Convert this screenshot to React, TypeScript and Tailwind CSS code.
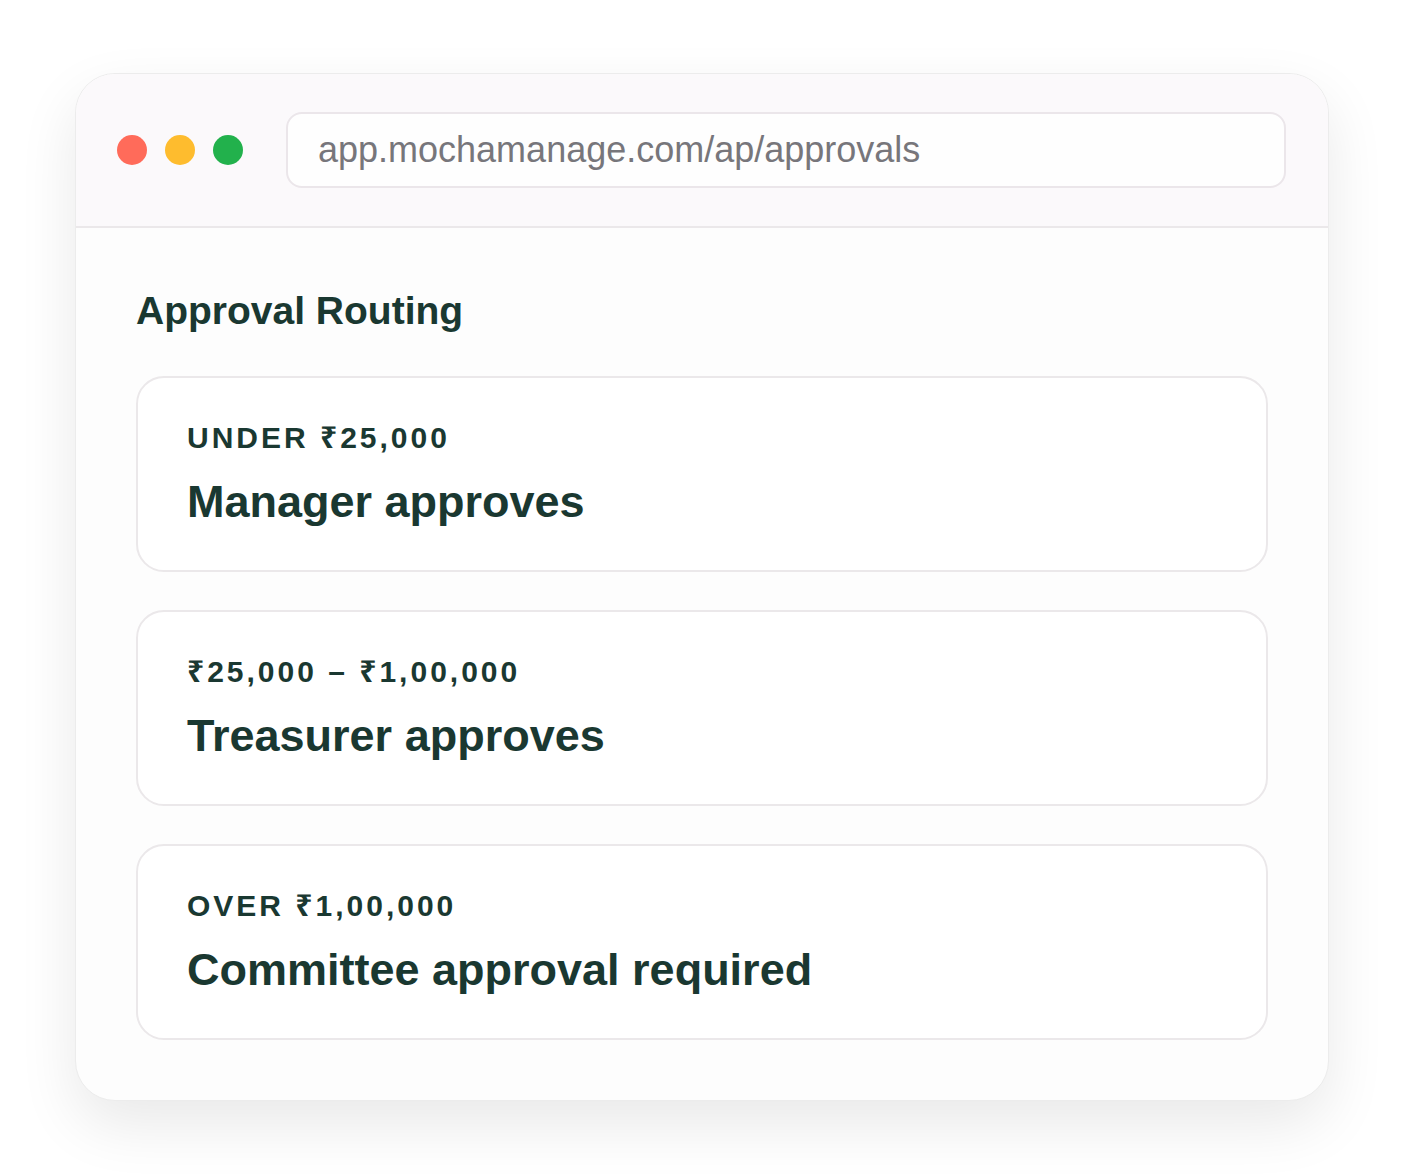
const tiers = [
  { range: 'UNDER ₹25,000', who: 'Manager approves' },
  { range: '₹25,000 – ₹1,00,000', who: 'Treasurer approves' },
  { range: 'OVER ₹1,00,000', who: 'Committee approval required' },
];

export default function App() {
  return (
    <div
      className="min-h-[1176px] w-full bg-white flex justify-center pt-[73px] pb-[75px]"
      style={{ fontFamily: '"Liberation Sans", "Noto Sans", Arial, sans-serif' }}
    >
      <div className="w-[1254px] rounded-[40px] border border-[#ececec] bg-[#fdfdfd] overflow-hidden shadow-[0_24px_60px_rgba(0,0,0,0.09)]">
        {/* browser chrome */}
        <div className="flex items-center bg-[#fbf9fb] border-b-2 border-[#ebe8ea] pl-[41px] pr-[42px] py-[38px]">
          <div className="flex gap-[18px]">
            <span className="w-[30px] h-[30px] rounded-full bg-[#ff6b5a]" />
            <span className="w-[30px] h-[30px] rounded-full bg-[#febc2e]" />
            <span className="w-[30px] h-[30px] rounded-full bg-[#22b14c]" />
          </div>
          <div className="ml-[43px] flex-1 h-[76px] rounded-[16px] border-2 border-[#ebe6ea] bg-[#fefefe] flex items-center px-[30px]">
            <span className="text-[36px] text-[#77767b] leading-none">app.mochamanage.com/ap/approvals</span>
          </div>
        </div>

        {/* page */}
        <div className="px-[60px] pt-[59px] pb-[60px]">
          <h2 className="text-[39px] leading-[48px] font-bold text-[#1a3831]">Approval Routing</h2>
          <div className="mt-[41px] flex flex-col gap-[38px]">
            {tiers.map((t) => (
              <div
                key={t.who}
                className="rounded-[28px] border-2 border-[#ebe8ea] bg-white px-[49px] py-[42px] flex flex-col gap-[20px]"
              >
                <div className="text-[30px] leading-[36px] font-bold tracking-[0.1em] text-[#1a3831]">{t.range}</div>
                <div className="text-[45px] leading-[52px] font-bold text-[#1a3831]">{t.who}</div>
              </div>
            ))}
          </div>
        </div>
      </div>
    </div>
  );
}
